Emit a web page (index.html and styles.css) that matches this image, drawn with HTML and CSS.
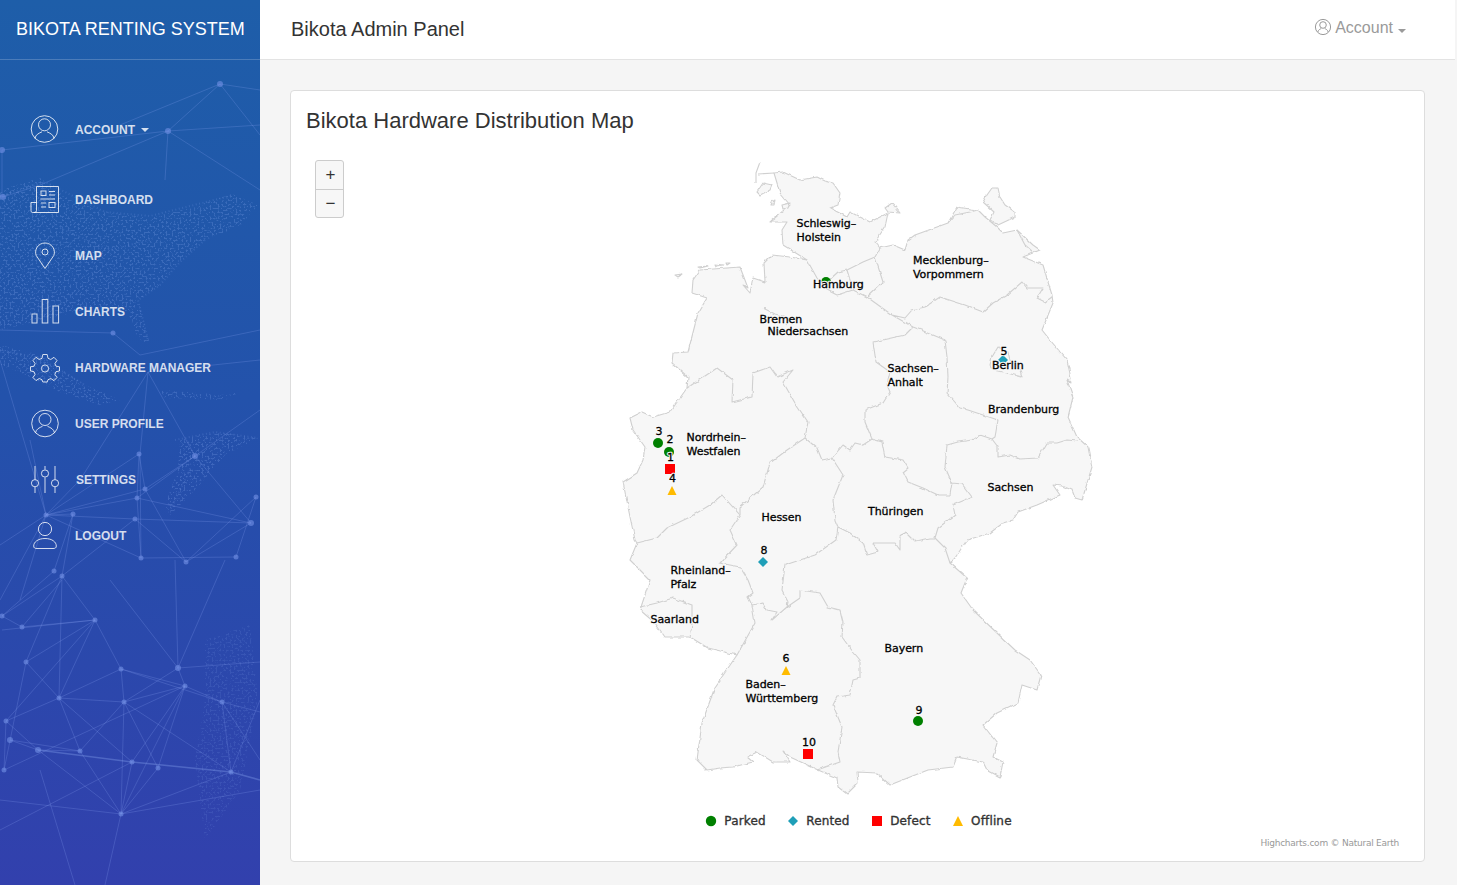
FILE: index.html
```html
<!DOCTYPE html>
<html lang="en">
<head>
<meta charset="utf-8">
<title>Bikota Admin Panel</title>
<link rel="stylesheet" href="styles.css">
</head>
<body>
<div class="app">
  <aside class="sidebar">
    <svg class="sidebar-bg" viewBox="0 0 260 885" aria-hidden="true">
      <defs>
        <filter id="speckle" x="0" y="0" width="100%" height="100%">
          <feTurbulence type="fractalNoise" baseFrequency=".5" numOctaves="2" seed="7" result="n"/>
          <feColorMatrix in="n" type="matrix" values="0 0 0 0 0  0 0 0 0 0  0 0 0 0 0  0 0 0 8 -4.3" result="dots"/>
          <feComposite in="SourceGraphic" in2="dots" operator="in"/>
          <feGaussianBlur stdDeviation=".45"/>
        </filter>
      </defs>
      <path class="land" filter="url(#speckle)" d="M0,190 L40,178 L70,200 L105,212 L150,218 L190,208 L232,194 L258,205 L240,226 L205,240 L178,262 L160,285 L138,300 L150,345 L138,338 L128,312 L92,308 L50,318 L0,330 Z M0,345 L40,355 L85,385 L120,400 L100,405 L60,392 L20,372 L0,365 Z M160,390 L225,395 L240,392 L225,400 L165,398 Z M180,440 L215,432 L258,438 L225,455 L195,490 L170,515 L165,505 L178,470 Z"/>
      <path class="land land-faint" filter="url(#speckle)" d="M205,640 L250,625 L258,700 L240,790 L205,840 L195,760 L205,700 Z"/>
      <path class="coast" d="M0,196 L45,182 L105,212 L150,216 L230,196 M205,240 L180,262 L160,285 L138,300 L148,340 M60,228 L110,250 L150,240 M0,350 L40,358 L85,385 M175,440 L215,432 L258,438 M190,470 L170,510"/>
      <path class="net" d="M220,84 L168,131 L2,150 M168,131 L40,185 L3,197 M220,84 L260,90 M220,84 L260,135 M168,131 L260,125 M168,131 L260,190 M168,131 L165,180 M220,84 L120,125 M2,150 L2,197 M113,333 L0,330 M113,333 L140,355 L260,330 M148,372 L260,360 M148,372 L80,480 L46,515 M148,372 L140,454 L141,558 M148,372 L195,456 L251,523 M260,410 L195,456 L137,498 L46,515 L0,545 M195,456 L145,489 L46,515 M139,454 L46,515 M139,454 L145,489 L186,562 M139,454 L137,498 L141,558 M46,515 L135,519 L186,562 M46,515 L73,514 L62,576 M46,515 L141,558 L236,557 M251,523 L137,498 M251,523 L135,519 M251,523 L186,562 M256,497 L186,562 M256,497 L236,557 M135,519 L62,576 M0,600 L46,515 L20,600 M73,514 L54,571 M30,440 L46,515 M0,360 L46,515 M54,571 L2,616 M62,580 L22,627 M62,576 L95,620 M62,576 L26,662 M62,576 L59,698 M62,576 L2,616 M95,620 L22,627 L2,616 M95,620 L59,698 M95,620 L121,669 M95,620 L2,630 M95,620 L26,662 M95,620 L6,721 M110,580 L178,668 M175,560 L178,668 L185,686 M225,560 L178,668 L260,662 M121,669 L185,686 L222,702 L260,712 M121,669 L59,698 L6,721 M121,669 L124,702 M26,662 L59,698 L124,702 L185,686 M59,698 L80,751 M59,698 L132,762 M124,702 L80,751 L10,740 M124,702 L158,768 M124,702 L121,814 M124,702 L231,772 M185,686 L132,762 M185,686 L158,768 M185,686 L121,814 M185,686 L4,770 M178,668 L124,702 M38,750 L10,740 M38,750 L121,814 M80,751 L38,750 M80,751 L121,814 M4,770 L26,662 M6,721 L4,770 M6,721 L38,750 M132,762 L121,814 M158,768 L121,814 M231,772 L121,814 M231,772 L260,700 M231,772 L222,702 L260,760 M121,814 L0,800 M121,814 L260,790 M121,814 L105,885 M40,770 L75,885 M0,830 L132,762 M121,669 L222,702"/>
      <path class="net band" d="M38,750 L132,762 L231,772 L260,780"/>
      <g class="nodes">
        <circle cx="220" cy="84" r="3"/><circle cx="168" cy="131" r="3"/><circle cx="2" cy="150" r="3"/><circle cx="3" cy="197" r="3"/><circle cx="113" cy="333" r="2.5"/><circle cx="139" cy="454" r="2.5"/><circle cx="195" cy="456" r="3"/><circle cx="145" cy="489" r="2.5"/><circle cx="137" cy="498" r="2.5"/><circle cx="256" cy="497" r="2.5"/><circle cx="251" cy="523" r="3"/><circle cx="46" cy="515" r="2.5"/><circle cx="73" cy="514" r="2.5"/><circle cx="135" cy="519" r="2.5"/><circle cx="141" cy="558" r="2.5"/><circle cx="186" cy="562" r="2.5"/><circle cx="236" cy="557" r="2.5"/><circle cx="54" cy="571" r="2.5"/><circle cx="62" cy="576" r="2.5"/><circle cx="2" cy="616" r="2.5"/><circle cx="22" cy="627" r="2.5"/><circle cx="95" cy="620" r="2.5"/><circle cx="26" cy="662" r="2.5"/><circle cx="121" cy="669" r="2.5"/><circle cx="178" cy="668" r="3"/><circle cx="185" cy="686" r="2.5"/><circle cx="59" cy="698" r="2.5"/><circle cx="124" cy="702" r="2.5"/><circle cx="222" cy="702" r="2.5"/><circle cx="6" cy="721" r="2.5"/><circle cx="10" cy="740" r="3"/><circle cx="38" cy="750" r="3"/><circle cx="80" cy="751" r="2.5"/><circle cx="132" cy="762" r="2.5"/><circle cx="158" cy="768" r="2.5"/><circle cx="231" cy="772" r="2.5"/><circle cx="4" cy="770" r="2.5"/><circle cx="121" cy="814" r="2.5"/>
      </g>
    </svg>
    <div class="brand">BIKOTA RENTING SYSTEM</div>
    <nav>
      <ul class="menu">
        <li class="menu-item menu-item-account">
          <svg class="menu-icon" viewBox="0 0 30 30"><circle cx="14.5" cy="14" r="13.3"/><circle cx="14.5" cy="9.8" r="6"/><path d="M5,23.5 C5.5,19.5 9,18.2 12,16.8 M24,23.5 C23.5,19.5 20,18.2 17,16.8"/></svg>
          <span>Account</span><i class="caret"></i>
        </li>
        <li class="menu-item">
          <svg class="menu-icon" viewBox="0 0 30 30"><path d="M6.5,25.5 V1.5 H28.5 V27.5 H2.5 C1.5,27.5 1,26.6 1,25.5 V17.5 H6.5 M6.5,25.5 C6.5,26.6 5.5,27.5 4,27.5"/><rect x="11" y="6" width="5" height="4.5"/><path d="M19,6.5 H25 M19,10 H25 M10.5,14 H25 M11,18 H16 M11,22 H16"/><rect x="19" y="17.5" width="6" height="5"/></svg>
          <span>Dashboard</span>
        </li>
        <li class="menu-item">
          <svg class="menu-icon" viewBox="0 0 30 30"><path d="M15,27.5 L6.2,14.5 C4,9 8,2 15,2 C22,2 26,9 23.8,14.5 Z"/><circle cx="15" cy="11" r="3"/></svg>
          <span>Map</span>
        </li>
        <li class="menu-item">
          <svg class="menu-icon" viewBox="0 0 30 30"><rect x="2" y="17" width="5" height="9"/><rect x="12.2" y="2.5" width="5.6" height="23.5"/><rect x="23" y="9" width="5.6" height="17"/></svg>
          <span>Charts</span>
        </li>
        <li class="menu-item">
          <svg class="menu-icon" viewBox="0 0 30 30"><path d="M12.8,1.5 H17.2 L18,5.3 L20.8,6.5 L24,4.3 L27,7.5 L24.9,10.6 L26,13.2 L29.5,13.8 V18 L26,18.7 L24.9,21.4 L27,24.5 L24,27.6 L20.8,25.5 L18,26.7 L17.2,29 H12.8 L12,26.7 L9.2,25.5 L6,27.6 L3,24.5 L5.1,21.4 L4,18.7 L.5,18 V13.8 L4,13.2 L5.1,10.6 L3,7.5 L6,4.3 L9.2,6.5 L12,5.3 Z"/><circle cx="15" cy="15.5" r="3.6"/></svg>
          <span>Hardware Manager</span>
        </li>
        <li class="menu-item">
          <svg class="menu-icon" viewBox="0 0 30 30"><circle cx="15" cy="14.5" r="13.3"/><circle cx="15" cy="10.5" r="6"/><path d="M5.5,24 C6,20 9.5,18.7 12.5,17.3 M24.5,24 C24,20 20.5,18.7 17.5,17.3"/></svg>
          <span>User Profile</span>
        </li>
        <li class="menu-item menu-item-settings">
          <svg class="menu-icon" viewBox="0 0 30 30"><path d="M5,1 V14.5 M5,22 V28 M15,1 V4.5 M15,12.5 V28 M25,1 V14.5 M25,22 V28"/><circle cx="5" cy="18.2" r="3.6"/><circle cx="15" cy="8.5" r="3.6"/><circle cx="25" cy="18.2" r="3.6"/></svg>
          <span>Settings</span>
        </li>
        <li class="menu-item">
          <svg class="menu-icon" viewBox="0 0 30 30"><circle cx="15" cy="8" r="6.6"/><path d="M15,17.5 C8,17.5 3.7,21 3.7,25 C3.7,27 5,27.5 7,27.5 H23 C25,27.5 26.3,27 26.3,25 C26.3,21 22,17.5 15,17.5 Z"/></svg>
          <span>Logout</span>
        </li>
      </ul>
    </nav>
  </aside>

  <div class="main">
    <header class="navbar">
      <div class="navbar-title">Bikota Admin Panel</div>
      <div class="navbar-account">
        <svg class="account-icon" viewBox="0 0 18 18"><circle cx="9" cy="9" r="7.6"/><circle cx="9" cy="7" r="3.3"/><path d="M3.8,14 C4.3,11.8 6,11.3 7.3,10.4 M14.2,14 C13.7,11.8 12,11.3 10.7,10.4"/></svg>
        <span>Account</span><i class="caret"></i>
      </div>
    </header>

    <main class="content">
      <section class="card">
        <h4 class="card-title">Bikota Hardware Distribution Map</h4>
        <div class="chart">
          <div class="zoom">
            <div class="zoom-btn">+</div>
            <div class="zoom-btn">−</div>
          </div>
          <svg class="map" viewBox="291 148 1133 660" role="img" aria-label="Map of Germany">
            <defs>
              <filter id="wiggle" x="-2%" y="-2%" width="104%" height="104%">
                <feTurbulence type="fractalNoise" baseFrequency=".16" numOctaves="2" seed="3" result="n"/>
                <feDisplacementMap in="SourceGraphic" in2="n" scale="3.2" xChannelSelector="R" yChannelSelector="G"/>
              </filter>
            </defs>
            <g filter="url(#wiggle)">
            <g class="land-shape">
              <path d="M774,173 L783,172 L800,180 L817,177 L825,181 L833,183 L840,193 L838,205 L830,208 L847,217 L850,212 L870,222 L888,213 L885,227 L875,242 L880,248 L893,245 L905,250 L908,240 L915,235 L948,223 L957,207 L970,209 L978,210 L985,217 L997,227 L1003,233 L1017,230 L1033,245 L1040,250 L1023,257 L1043,265 L1048,282 L1052,295 L1053,303 L1042,330 L1050,340 L1067,360 L1072,383 L1067,380 L1073,397 L1068,417 L1077,437 L1088,447 L1092,467 L1082,500 L1075,498 L1072,490 L1062,486 L1053,485 L1060,495 L1037,505 L1018,512 L1013,520 L1003,523 L990,533 L967,540 L955,558 L950,563 L967,578 L961,593 L973,610 L997,633 L1015,650 L1030,660 L1041,675 L1037,690 L1022,685 L1018,703 L997,713 L983,725 L997,743 L993,757 L1003,762 L1000,777 L987,770 L983,762 L957,757 L953,767 L928,770 L910,777 L890,785 L877,773 L857,772 L858,783 L847,794 L838,787 L837,778 L818,770 L803,763 L790,757 L783,751 L790,762 L773,762 L757,752 L747,757 L753,762 L733,767 L720,768 L707,770 L697,760 L702,723 L715,687 L737,655 L708,648 L690,637 L665,637 L655,623 L640,610 L645,595 L650,580 L630,560 L637,543 L635,540 L630,517 L623,482 L637,473 L643,460 L645,447 L633,430 L630,418 L642,412 L653,417 L670,412 L687,388 L688,377 L672,363 L673,353 L688,352 L698,313 L707,298 L692,293 L693,280 L700,270 L740,267 L748,288 L743,285 L750,293 L753,278 L765,282 L764,263 L772,255 L790,257 L807,260 L783,245 L782,230 L787,222 L770,222 L790,205 L780,193 Z"/>
              <path d="M885,208 L892,203 L900,213 L888,212 Z"/>
              <path d="M983,202 L987,195 L992,188 L998,188 L1000,197 L1005,205 L1015,212 L1015,217 L998,225 L990,220 L994,212 Z"/>
              <path d="M757,192 L763,183 L772,185 L770,190 L760,195 Z"/>
              <path d="M772,202 L775,200 L774,205 L771,205 Z"/>
              <path d="M782,205 L790,203 L788,208 L783,209 Z"/>
              <path d="M675,275 L682,274 L678,277 Z"/>
              <path d="M698,267 L708,266 L700,268 Z"/>
              <path d="M715,264 L723,265 L716,266 Z"/>
              <path d="M726,263 L730,263 L727,265 Z"/>
              <path class="line" d="M760,162 L756,173 L756,183 M758,174 L774,173 M948,223 L955,215 L970,212 L978,210 M1017,230 L1025,245 L1033,252"/>
            </g>
            <path class="borders" d="M807,260 L817,278 L827,290 L837,295 L853,290 L847,270 L838,272 L827,282 M847,270 L863,262 L875,257 L883,282 L867,297 L853,290 M875,257 L880,248 M867,297 L892,315 L913,327 L921,330 L945,340 L947,357 L948,377 L947,393 L960,408 L968,410 L998,420 L995,437 L992,439 L998,447 L998,457 L1010,455 L1020,459 L1038,458 L1047,443 L1057,443 L1067,440 L1077,441 M892,315 L905,318 L912,310 L925,307 L940,297 L965,305 L983,312 L993,303 L1007,295 L1022,282 L1027,288 L1043,288 L1037,298 L1045,302 L1052,297 M913,327 L905,335 L873,342 L876,362 L890,372 L887,385 L890,392 L883,403 L865,410 L865,422 L872,439 L863,445 L855,443 L850,450 L843,445 L832,458 L822,460 L817,448 L805,438 L808,422 L795,403 L783,382 L793,370 L777,377 L770,367 L753,373 L752,397 L732,402 L733,380 L717,368 L687,388 M992,439 L980,435 L973,440 L958,442 L947,445 L945,467 L952,483 L950,495 L938,495 L923,488 L908,482 L903,472 L908,468 L903,460 L885,457 L882,442 L872,439 M952,483 L962,484 L972,497 L953,505 L955,515 L938,528 L935,538 L945,548 L950,563 M935,539 L930,539 L915,542 L905,532 L900,537 L900,550 L895,543 L873,543 L878,552 L867,555 L863,543 L850,533 L838,527 M832,458 L843,475 L833,500 L835,520 L838,527 L836,540 L815,555 L785,565 L782,590 L788,602 L787,607 L772,620 L777,612 L767,610 L763,603 L752,605 L748,597 L753,593 L748,580 L740,567 L720,563 L737,545 L730,530 L740,515 L722,495 L710,505 L690,517 L667,528 L657,538 L637,543 M740,515 L740,507 L763,487 L770,463 L787,450 L805,438 M787,607 L800,598 L800,590 L820,593 L828,607 L840,610 L843,622 L842,637 L850,648 L860,660 L860,678 L853,680 L850,695 L837,697 L833,705 L842,727 L838,752 L840,762 L817,770 M752,605 L755,623 L737,655 M640,607 L657,603 L673,598 L692,605 L692,623 L690,637 M763,308 L775,314 L790,318 L786,325 M992,357 L998,347 L1008,352 L1010,360 L1020,370 L1022,377 L1007,373 L993,370 L990,365 Z"/>
            </g>

            <circle class="parked" cx="826" cy="282" r="5"/>
            <path class="rented" d="M1003,355 L1008,360 L1003,365 L998,360 Z"/>
            <circle class="parked" cx="658" cy="443" r="5"/>
            <circle class="parked" cx="669" cy="452" r="5"/>
            <rect class="defect" x="665" y="464" width="10" height="10"/>
            <path class="offline" d="M672,486 L676.5,495 L667.5,495 Z"/>
            <path class="rented" d="M763,557 L768,562 L763,567 L758,562 Z"/>
            <path class="offline" d="M786,666 L790.5,675 L781.5,675 Z"/>
            <circle class="parked" cx="918" cy="721" r="5"/>
            <rect class="defect" x="803" y="749" width="10" height="10"/>

            <g class="labels halo"><use href="#map-labels"/></g>
            <g class="labels ink">
              <g id="map-labels">
                <text x="796.5" y="227">Schleswig–</text><text x="796.5" y="241">Holstein</text>
                <text x="813" y="288">Hamburg</text>
                <text x="759.5" y="323">Bremen</text>
                <text x="767.5" y="335">Niedersachsen</text>
                <text x="913" y="264">Mecklenburg–</text><text x="913" y="278">Vorpommern</text>
                <text x="887.5" y="372">Sachsen–</text><text x="887.5" y="386">Anhalt</text>
                <text x="992" y="369">Berlin</text>
                <text x="988" y="413">Brandenburg</text>
                <text x="987.5" y="491">Sachsen</text>
                <text x="868" y="515">Thüringen</text>
                <text x="761.5" y="521">Hessen</text>
                <text x="686.5" y="441">Nordrhein–</text><text x="686.5" y="455">Westfalen</text>
                <text x="670.5" y="574">Rheinland–</text><text x="670.5" y="588">Pfalz</text>
                <text x="650.5" y="623">Saarland</text>
                <text x="884.5" y="652">Bayern</text>
                <text x="745.5" y="688">Baden–</text><text x="745.5" y="702">Württemberg</text>
                <text class="num" x="1004" y="355">5</text>
                <text class="num" x="659" y="435">3</text>
                <text class="num" x="670" y="443">2</text>
                <text class="num" x="670.5" y="461">1</text>
                <text class="num" x="672.5" y="482">4</text>
                <text class="num" x="764" y="554">8</text>
                <text class="num" x="786" y="662">6</text>
                <text class="num" x="919" y="714">9</text>
                <text class="num" x="809" y="746">10</text>
              </g>
            </g>
          </svg>
          <ul class="legend">
            <li class="legend-item"><svg class="legend-icon" viewBox="0 0 12 12"><circle class="parked" cx="6" cy="6" r="5.2"/></svg>Parked</li>
            <li class="legend-item"><svg class="legend-icon" viewBox="0 0 12 12"><path class="rented" d="M6,1 L11,6 L6,11 L1,6 Z"/></svg>Rented</li>
            <li class="legend-item"><svg class="legend-icon" viewBox="0 0 12 12"><rect class="defect" x="1" y="1" width="10" height="10"/></svg>Defect</li>
            <li class="legend-item"><svg class="legend-icon" viewBox="0 0 12 12"><path class="offline" d="M6,1 L11,11 L1,11 Z"/></svg>Offline</li>
          </ul>
          <div class="credits">Highcharts.com © Natural Earth</div>
        </div>
      </section>
    </main>
  </div>
</div>
</body>
</html>
```

FILE: styles.css
```css
* { box-sizing: border-box; }
html, body { height: 100%; }
body {
  margin: 0;
  background: #f5f5f5;
  font-family: "Liberation Sans", Arial, sans-serif;
  color: #333;
  overflow: hidden;
}
.app { display: flex; height: 100vh; }

/* Sidebar */
.sidebar {
  position: relative;
  width: 260px;
  flex: none;
  background: linear-gradient(180deg, #1e5ea9 0%, #2352ab 45%, #2b48ac 75%, #3240ad 100%);
  overflow: hidden;
}
.sidebar-bg { position: absolute; inset: 0; width: 260px; height: 885px; }
.land { fill: #86a8ee; opacity: .26; }
.land-faint { opacity: .14; }
.coast { fill: none; stroke: #7fa6ee; stroke-width: 2; stroke-dasharray: 1 2.5; opacity: .22; }
.net { fill: none; stroke: #8aa5f2; stroke-width: .8; opacity: .3; }
.net.band { stroke-width: 1.6; opacity: .35; }
.nodes circle { fill: #7391e6; opacity: .6; }
.brand {
  position: relative;
  height: 60px;
  padding-left: 16px;
  border-bottom: 1px solid rgba(255, 255, 255, .2);
  color: #fff;
  font-size: 18px;
  line-height: 59px;
  white-space: nowrap;
}
.menu {
  position: relative;
  list-style: none;
  margin: 0;
  padding: 42px 0 0;
}
.menu-item {
  display: flex;
  align-items: center;
  gap: 15px;
  height: 56px;
  padding-left: 30px;
  color: rgba(255, 255, 255, .82);
  font-size: 12px;
  font-weight: 700;
  text-transform: uppercase;
}
.menu-item-account { margin-bottom: 14px; }
.menu-item-settings { gap: 16px; }
.menu-icon {
  width: 30px;
  height: 30px;
  flex: none;
  fill: none;
  stroke: rgba(255, 255, 255, .8);
  stroke-width: 1;
}
.caret {
  display: inline-block;
  width: 0;
  height: 0;
  border-top: 4px solid currentColor;
  border-left: 4px solid transparent;
  border-right: 4px solid transparent;
}
.menu-item .caret { margin-left: -9px; }

/* Main column */
.main { flex: 1; display: flex; flex-direction: column; min-width: 0; }
.navbar {
  display: flex;
  align-items: center;
  justify-content: space-between;
  height: 60px;
  flex: none;
  margin-right: 2px;
  padding: 0 49px 0 31px;
  background: #fff;
  border-bottom: 1px solid #e3e3e3;
}
.navbar-title { font-size: 20px; color: #333; }
.navbar-account {
  display: flex;
  align-items: center;
  gap: 3px;
  color: #9a9a9a;
  font-size: 16px;
  padding-bottom: 3px;
}
.navbar-account .caret { margin: 5px 0 0 2px; border-width: 4px 4px 0; }
.account-icon { width: 18px; height: 18px; fill: none; stroke: #9a9a9a; stroke-width: 1; margin-top: -2px; }

/* Card */
.content {
  flex: 1;
  display: flex;
  padding: 30px 32px 23px 30px;
  min-height: 0;
}
.card {
  flex: 1;
  background: #fff;
  border: 1px solid #ddd;
  border-radius: 4px;
  display: flex;
  flex-direction: column;
}
.card-title {
  margin: 15px 0 0;
  padding-left: 15px;
  font-size: 22px;
  line-height: 30px;
  font-weight: 400;
  color: #333;
}
.chart { position: relative; margin-top: 12px; flex: 1; }
.zoom {
  position: absolute;
  left: 24px;
  top: 12px;
  width: 29px;
  border: 1px solid #ccc;
  border-radius: 3px;
  background: #f7f7f7;
}
.zoom-btn {
  height: 28px;
  text-align: center;
  font-size: 17px;
  line-height: 28px;
  color: #333;
  padding-left: 2px;
}
.zoom-btn + .zoom-btn { border-top: 1px solid #ccc; }
.map { display: block; width: 1133px; height: 660px; }
.land-shape path { fill: #f7f7f7; stroke: #d0d0d0; stroke-width: 1.1; stroke-linejoin: round; }
.land-shape .line { fill: none; }
.borders { fill: none; stroke: #d0d0d0; stroke-width: 1.1; stroke-linejoin: round; }
.parked { fill: #008000; }
.rented { fill: #1f9fb8; }
.defect { fill: #ff0000; }
.offline { fill: #ffbb00; }
.labels text {
  font-family: "DejaVu Sans", sans-serif;
  font-size: 11px;
  letter-spacing: -.05px;
}
.labels .num { text-anchor: middle; }
.labels.ink { fill: #000; stroke: #000; stroke-width: .3px; }
.labels.halo { fill: #f7f7f7; stroke: #f7f7f7; stroke-width: 2.4px; stroke-linejoin: round; }
.legend {
  list-style: none;
  display: flex;
  justify-content: center;
  gap: 21.5px;
  margin: 0;
  padding: 0 0 0 2px;
  height: 26px;
  align-items: center;
}
.legend-item {
  display: flex;
  align-items: center;
  gap: 7px;
  font-family: "DejaVu Sans", sans-serif;
  font-size: 12px;
  letter-spacing: .15px;
  color: #333;
  -webkit-text-stroke: .35px #333;
}
.legend-icon { width: 12px; height: 12px; }
.credits {
  margin-top: 2px;
  padding-right: 25px;
  text-align: right;
  font-family: "DejaVu Sans", sans-serif;
  font-size: 9px;
  letter-spacing: -.24px;
  line-height: 14px;
  color: #999;
}
```
